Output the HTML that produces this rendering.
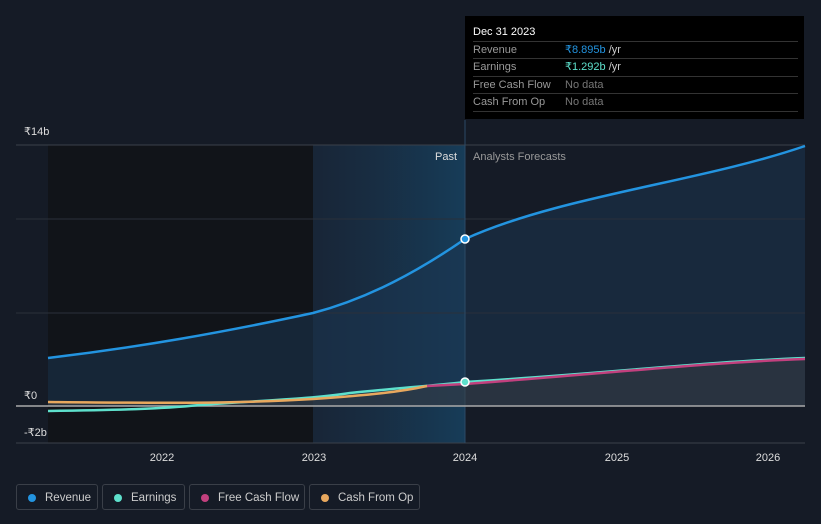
<!DOCTYPE html>
<html><head><style>
body{margin:0;background:#151b26;font-family:"Liberation Sans",sans-serif;}
.w{position:relative;width:821px;height:524px;overflow:hidden;background:#151b26;}
.tt{position:absolute;left:465px;top:16px;width:339px;height:103px;background:#000;color:#fff;font-size:11px;}
.tt .h{position:absolute;left:8px;top:10px;font-size:11px;}
.tt .r{position:absolute;left:8px;width:325px;height:17px;border-top:1px solid #333;color:#999;line-height:17px;}
.tt .r span{position:absolute;left:92px;}
.lg{position:absolute;top:484px;height:26px;border:1px solid #3a3f48;border-radius:3px;color:#ccc;font-size:11.5px;line-height:26px;box-sizing:border-box;}
.lg i{position:absolute;left:11px;top:9px;width:8px;height:8px;border-radius:50%;}
.lg b{font-weight:normal;position:absolute;left:28px;}
</style></head><body><div class="w">
<svg width="821" height="524" style="position:absolute;left:0;top:0">
<defs>
<linearGradient id="hl" x1="0" x2="1"><stop offset="0" stop-color="#1a3048" stop-opacity=".5"/><stop offset="1" stop-color="#17405e" stop-opacity=".9"/></linearGradient>
</defs>
<rect x="48" y="145" width="265" height="298" fill="#111419"/>
<rect x="313" y="145" width="152" height="298" fill="url(#hl)"/>
<path d="M48 358 C140 347 220 333 313 313 C370 298 420 270 465 239 C560 196 700 182 805 146 L805 406 L48 406Z" fill="#1b3550" opacity=".55"/>
<line x1="16" y1="145" x2="805" y2="145" stroke="#3a404a"/>
<line x1="16" y1="219" x2="805" y2="219" stroke="#2a303a"/>
<line x1="16" y1="313" x2="805" y2="313" stroke="#2a303a"/>
<line x1="16" y1="443" x2="805" y2="443" stroke="#3a404a"/>
<line x1="465" y1="120" x2="465" y2="443" stroke="#2c4a66"/>
<path d="M48 402 C150 403 230 404 313 399 C370 395 400 392 427 386 L805 359 L805 406 L48 406Z" fill="#3a3e44" opacity=".5"/>
<line x1="16" y1="406" x2="805" y2="406" stroke="#aaa" stroke-width="1.5"/>
<path d="M48 358 C140 347 220 333 313 313 C370 298 420 270 465 239 C560 196 700 182 805 146" fill="none" stroke="#2394e0" stroke-width="2.5"/>
<path d="M48 411 C120 410 160 409 200 405 C250 401 313 399 350 393 C400 388 440 385 465 382 C600 374 700 362 805 358" fill="none" stroke="#5ee0cc" stroke-width="2.5"/>
<path d="M427 386 L465 384 C600 374 700 363 805 359" fill="none" stroke="#c2407e" stroke-width="2.5"/>
<path d="M48 402 C150 403 230 404 313 399 C370 395 400 392 427 386" fill="none" stroke="#e8a85e" stroke-width="2.5"/>
<circle cx="465" cy="239" r="4" fill="#2394e0" stroke="#fff" stroke-width="1.5"/>
<circle cx="465" cy="382" r="4" fill="#5ee0cc" stroke="#fff" stroke-width="1.5"/>
<g font-size="11" fill="#ddd" font-family="Liberation Sans,sans-serif">
<text x="24" y="135">₹14b</text><text x="24" y="399">₹0</text><text x="24" y="436">-₹2b</text>
<text x="162" y="461" text-anchor="middle">2022</text><text x="314" y="461" text-anchor="middle">2023</text><text x="465" y="461" text-anchor="middle">2024</text><text x="617" y="461" text-anchor="middle">2025</text><text x="768" y="461" text-anchor="middle">2026</text>
<text x="457" y="160" text-anchor="end">Past</text><text x="473" y="160" fill="#999">Analysts Forecasts</text>
</g>
</svg>
<div class="tt"><div class="h">Dec 31 2023</div>
<div class="r" style="top:25px">Revenue<span style="color:#2394e0">₹8.895b <em style="font-style:normal;color:#ccc">/yr</em></span></div>
<div class="r" style="top:42px">Earnings<span style="color:#5ee0cc">₹1.292b <em style="font-style:normal;color:#ccc">/yr</em></span></div>
<div class="r" style="top:60px">Free Cash Flow<span style="color:#777">No data</span></div>
<div class="r" style="top:77px;border-bottom:1px solid #333">Cash From Op<span style="color:#777">No data</span></div>
</div>
<div class="lg" style="left:16px;width:82px"><i style="background:#2394e0"></i><b>Revenue</b></div>
<div class="lg" style="left:102px;width:83px"><i style="background:#5ee0cc"></i><b>Earnings</b></div>
<div class="lg" style="left:189px;width:116px"><i style="background:#c2407e"></i><b>Free Cash Flow</b></div>
<div class="lg" style="left:309px;width:111px"><i style="background:#e8a85e"></i><b>Cash From Op</b></div>
</div></body></html>
